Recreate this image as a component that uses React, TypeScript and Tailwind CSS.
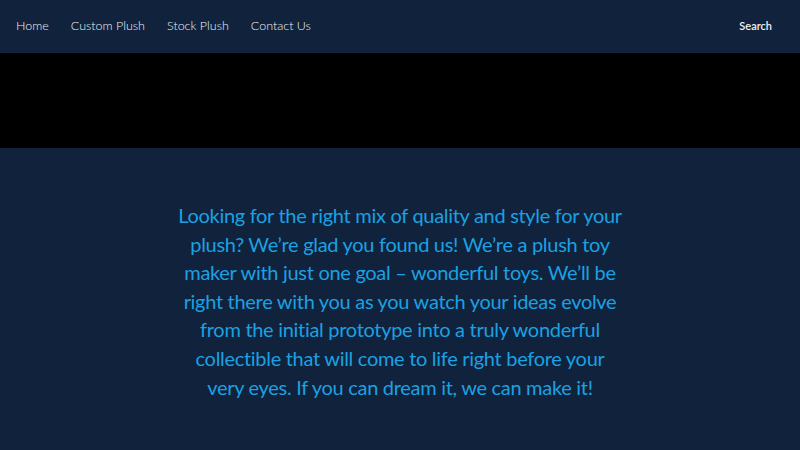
const lines = [
  "Looking for the right mix of quality and style for your",
  "plush? We’re glad you found us! We’re a plush toy",
  "maker with just one goal – wonderful toys. We’ll be",
  "right there with you as you watch your ideas evolve",
  "from the initial prototype into a truly wonderful",
  "collectible that will come to life right before your",
  "very eyes. If you can dream it, we can make it!",
];

export default function App() {
  return (
    <div className="w-[800px] h-[450px] bg-[#10223c] overflow-hidden">
      <header className="h-[53px] bg-[#10223c] flex items-center justify-between px-4">
        <nav className="flex items-center gap-[22px] text-[12.5px] font-light text-[#eef2f7] font-['Lato',sans-serif]">
          <a href="#">Home</a>
          <a href="#">Custom Plush</a>
          <a href="#">Stock Plush</a>
          <a href="#">Contact Us</a>
        </nav>
        <button className="text-[11px] font-semibold text-[#eef2f7] mr-[12px] font-['Lato',sans-serif]">Search</button>
      </header>
      <div className="h-[95px] bg-black" />
      <section className="flex justify-center pt-[53px]">
        <p className="text-center text-[20px] tracking-[-0.3px] leading-[28.6px] text-[#1ba1e2] font-['Lato',sans-serif]">
          {lines.map((l) => (
            <span key={l} className="block whitespace-nowrap">{l}</span>
          ))}
        </p>
      </section>
    </div>
  );
}
